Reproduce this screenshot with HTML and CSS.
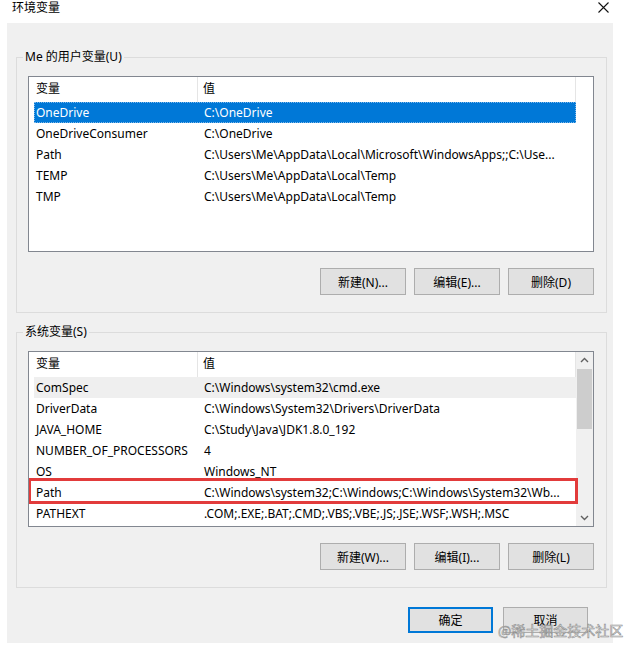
FILE: index.html
```html
<!DOCTYPE html>
<html lang="zh-CN">
<head>
<meta charset="utf-8">
<title>环境变量</title>
<link rel="stylesheet" href="styles.css">
</head>
<body>
<div class="window">
  <div class="titlebar">
    <span class="title">环境变量</span>
    <svg class="close" width="11" height="11" viewBox="0 0 11 11"><path d="M0.5 0.5 L10.5 10.5 M10.5 0.5 L0.5 10.5" stroke="#111" stroke-width="1.1" fill="none"/></svg>
  </div>
  <div class="dialog">
    <div class="group">
      <span class="group-label">Me 的用户变量(U)</span>
      <div class="list">
        <div class="list-body">
          <div class="list-head"><div class="hcol c1">变量</div><div class="hcol c2">值</div></div>
          <div class="row selected"><div class="c1">OneDrive</div><div class="c2">C:\OneDrive</div></div>
          <div class="row"><div class="c1">OneDriveConsumer</div><div class="c2">C:\OneDrive</div></div>
          <div class="row"><div class="c1">Path</div><div class="c2">C:\Users\Me\AppData\Local\Microsoft\WindowsApps;;C:\Use...</div></div>
          <div class="row"><div class="c1">TEMP</div><div class="c2">C:\Users\Me\AppData\Local\Temp</div></div>
          <div class="row"><div class="c1">TMP</div><div class="c2">C:\Users\Me\AppData\Local\Temp</div></div>
        </div>
        <div class="no-scroll"></div>
      </div>
      <div class="btn-row">
        <button class="btn">新建(N)...</button>
        <button class="btn">编辑(E)...</button>
        <button class="btn">删除(D)</button>
      </div>
    </div>

    <div class="group group2">
      <span class="group-label">系统变量(S)</span>
      <div class="list">
        <div class="list-body">
          <div class="list-head"><div class="hcol c1">变量</div><div class="hcol c2">值</div></div>
          <div class="row hover"><div class="c1">ComSpec</div><div class="c2">C:\Windows\system32\cmd.exe</div></div>
          <div class="row"><div class="c1">DriverData</div><div class="c2">C:\Windows\System32\Drivers\DriverData</div></div>
          <div class="row"><div class="c1">JAVA_HOME</div><div class="c2">C:\Study\Java\JDK1.8.0_192</div></div>
          <div class="row"><div class="c1">NUMBER_OF_PROCESSORS</div><div class="c2">4</div></div>
          <div class="row"><div class="c1">OS</div><div class="c2">Windows_NT</div></div>
          <div class="row marked"><div class="c1">Path</div><div class="c2">C:\Windows\system32;C:\Windows;C:\Windows\System32\Wb...</div><span class="mark"></span></div>
          <div class="row"><div class="c1">PATHEXT</div><div class="c2">.COM;.EXE;.BAT;.CMD;.VBS;.VBE;.JS;.JSE;.WSF;.WSH;.MSC</div></div>
        </div>
        <div class="scrollbar">
          <svg class="arrow" width="17" height="17" viewBox="0 0 17 17"><path d="M5 10 L8.5 6.5 L12 10" stroke="#606060" stroke-width="1.4" fill="none"/></svg>
          <div class="track"><div class="thumb"></div></div>
          <svg class="arrow" width="17" height="17" viewBox="0 0 17 17"><path d="M5 7 L8.5 10.5 L12 7" stroke="#606060" stroke-width="1.4" fill="none"/></svg>
        </div>
      </div>
      <div class="btn-row">
        <button class="btn">新建(W)...</button>
        <button class="btn">编辑(I)...</button>
        <button class="btn">删除(L)</button>
      </div>
    </div>

    <div class="footer">
      <button class="btn btn-ok">确定</button>
      <button class="btn btn-cancel">取消</button>
    </div>
  </div>
  <div class="watermark">@稀土掘金技术社区</div>
</div>
</body>
</html>
```

FILE: styles.css
```css
* { box-sizing: border-box; }
html, body { margin: 0; padding: 0; background: #ffffff; }
body {
  font-family: "Noto Sans", "Noto Sans CJK SC", sans-serif;
  font-size: 12px;
  color: #000;
}
.window {
  position: relative;
  width: 635px;
  height: 656px;
  background: #fff;
  overflow: hidden;
}
.titlebar {
  height: 23px;
  display: flex;
  align-items: flex-start;
  justify-content: space-between;
  padding: 0 26px 0 12px;
}
.title {
  font-size: 12px;
  line-height: 16px;
}
.close { margin-top: 2px; }
.dialog {
  margin-left: 7px;
  width: 606px;
  height: 620px;
  background: #f0f0f0;
  padding: 34px 6px 0 9px;
}
.group {
  position: relative;
  border: 1px solid #dcdcdc;
  padding: 18px 12px 17px 11px;
}
.group2 { margin-top: 19px; }
.group-label {
  position: absolute;
  top: -9px;
  left: 6px;
  padding: 0 2px;
  background: #f0f0f0;
  line-height: 16px;
  color: #000;
}
.list {
  height: 176px;
  border: 1px solid #828790;
  background: #fff;
  display: flex;
  overflow: hidden;
}
.list-body {
  flex: 1;
  min-width: 0;
}
.no-scroll { width: 17px; flex: none; }
.list-head {
  display: grid;
  grid-template-columns: 169px 1fr;
  height: 25px;
}
.hcol {
  line-height: 24px;
  border-right: 1px solid #e5e5e5;
  padding-left: 7px;
  white-space: nowrap;
}
.hcol.c2 { padding-left: 5px; }
.row {
  position: relative;
  display: grid;
  grid-template-columns: 164px 1fr;
  height: 21px;
  line-height: 21px;
  margin-left: 5px;
  white-space: nowrap;
}
.row .c1 { padding-left: 2px; }
.row .c2 { padding-left: 6px; }
.row.selected {
  background: #0078d7;
  color: #fff;
  outline: 1px dotted #7fb8e8;
  outline-offset: -1px;
}
.row.hover { background: #efefef; }
.mark {
  position: absolute;
  top: -4px;
  bottom: -1px;
  left: -6px;
  right: -2px;
  border: 3px solid #e23b3b;
  pointer-events: none;
}
.scrollbar {
  width: 17px;
  flex: none;
  background: #f0f0f0;
  display: flex;
  flex-direction: column;
}
.arrow { flex: none; display: block; }
.track { flex: 1; }
.thumb {
  margin: 0 1px;
  height: 60px;
  background: #cdcdcd;
}
.btn-row {
  display: flex;
  justify-content: flex-end;
  gap: 8px;
  margin-top: 16px;
}
.btn {
  width: 86px;
  height: 27px;
  background: #e1e1e1;
  border: 1px solid #adadad;
  font-family: "Noto Sans", "Noto Sans CJK SC", sans-serif;
  font-size: 12px;
  color: #000;
  padding: 0;
  margin: 0;
}
.footer {
  display: flex;
  justify-content: flex-end;
  gap: 10px;
  margin-top: 19px;
  padding-right: 19px;
}
.btn-ok, .btn-cancel { width: 85px; height: 26px; }
.btn-ok { border: 2px solid #0078d7; }
.watermark {
  position: absolute;
  left: 498px;
  top: 621px;
  font-size: 14px;
  line-height: 18px;
  color: rgba(255, 255, 255, 0.5);
  -webkit-text-stroke: 0.6px #8f8f8f;
  font-family: "Noto Sans CJK SC", sans-serif;
  white-space: nowrap;
}
```
